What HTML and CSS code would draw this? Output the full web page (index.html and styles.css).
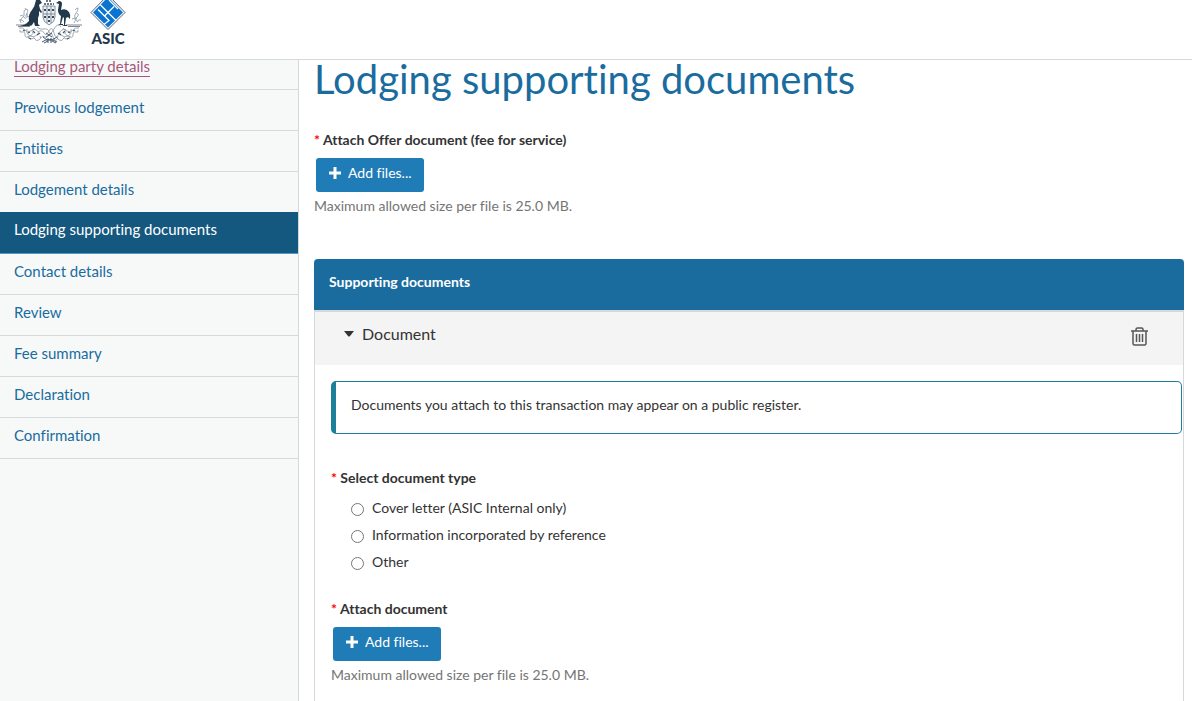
FILE: index.html
```html
<!DOCTYPE html>
<html lang="en">
<head>
  <meta charset="UTF-8">
  <title>Lodging supporting documents</title>
  <meta name="viewport" content="width=device-width, initial-scale=1.0">
  <link rel="stylesheet" href="styles.css">
</head>
<body>

<header class="site-header">
  <!-- coat of arms -->
  <svg class="crest" viewBox="0 0 68 46" aria-hidden="true">
    <g fill="none" stroke="#8a96a1" stroke-width="0.8">
      <path d="M1 25h16M51 25h16M3 26.500h12M53 26.500h12" stroke="#5d6b7a"/>
      <path d="M6 23q-2-3 1-5t2-5 3-4q2 2 0 4t2 4 0 5-4 2M10 8l1 2M5 16q3-2 4 1t4-1M4 20q4-1 5 2M13 14q-3 0-2 3"/>
      <path d="M59 23q2-2 1-5t1-5 2-5q-2 0-3 2M62 13q3 2 0 4t1 5M57 19q3-2 5 0M66 20q-3-1-4 2"/>
      <path d="M4 28q4-1 6 2t6 1 4-3M5 30q-1 3 2 2t3 3 5 1 2-4M12 29q-1 5 3 7t7-1-1-5-4 1M13 36q0 3 3 3t3-2M19 38q2 4 5 2t1-4"/>
      <path d="M64 28q-4-1-6 2t-6 1-4-3M63 30q1 3-2 2t-3 3-5 1-2-4M56 29q1 5-3 7t-7-1 1-5 4 1M55 36q0 3-3 3t-3-2M49 38q-2 4-5 2t-1-4"/>
      <path d="M22 27q3 3 7 2t5 3 5-3 7-2M23 32q4-3 6 1t5-2 5 2 6-1M25 38q3-3 5-1t4-2 4 2 5 1"/>
    </g>
    <g fill="none" stroke="#66788a" stroke-width="0.8">
      <path d="M28 6h12v11q0 5-6 8-6-3-6-8z" fill="#eef0f2"/>
      <path d="M28 14h12M32 6v17M36 6v17"/>
      <path d="M29 10h2m2 0h2m2 0h2M29 17h2m2 0h2m2 0h2M33 21h2" stroke="#3a4d5f" stroke-width="2"/>
      <path d="M29 4h10M31 1h6" stroke="#3a4d5f" stroke-width="1.500" stroke-dasharray="2 1"/>
    </g>
    <g fill="none" stroke="#44566a" stroke-width="1">
      <path d="M28 37l4 3h5l5-3M27 42q7-5 15 0M29 43l4-2m4 0l4 2M33 38v5m3-5v5M31 33l6 4m0-4l-6 4"/>
      <path d="M8 30l2 1M13 33l2-1M18 31l2 2M22 35l3-2M60 30l-2 1M55 33l-2-1M50 31l-2 2M46 35l-3-2M14 38l2 1M54 38l-2 1" stroke-width="1.200"/>
    </g>
    <g fill="#22384b">
      <!-- kangaroo -->
      <path d="M21 0h4l2 3-2 1-1 1 1 4 2 3-1 1-2-2v4l-1 3v6l2 2h-5l-1-4-2 3-3 1H5l6-2 3-3q-1-7 3-11 3-4 4-10z"/>
      <!-- emu -->
      <path d="M41 3l3-2q3 0 3 3l-1 6q5-2 8 2 2 3 1 7l-2-2-2 1-1 7h2v1h-5l2-1v-7l-1-1-2 7h2v1h-5l2-1 1-8q-3-2-3-6l1-6z"/>
    </g>
  </svg>

  <div class="brand">
    <svg class="brand-mark" viewBox="0 0 36 31" aria-hidden="true">
      <path d="M18-5L35 12.500 18 29.500 1 12.500z" fill="#fff" stroke="#4f6070" stroke-width="1"/>
      <path d="M18-3L33 12.500 18 27.500 3 12.500z" fill="#0a74d1"/>
      <path d="M10 4.500l16 16M14 16.500l4.500-4.500M24 6.500l-5.500 5.500M8 9.500l11 11-5 4M19 0l9 9" fill="none" stroke="#fff" stroke-width="1.300"/>
    </svg>
    <span class="brand-name">ASIC</span>
  </div>
</header>

<div class="page">
  <nav class="steps" aria-label="Lodgement steps">
    <a class="visited" href="#party"><span>Lodging party details</span></a>
    <a href="#previous">Previous lodgement</a>
    <a href="#entities">Entities</a>
    <a href="#lodgement">Lodgement details</a>
    <a class="active" href="#supporting" aria-current="page">Lodging supporting documents</a>
    <a href="#contact">Contact details</a>
    <a href="#review">Review</a>
    <a href="#fees">Fee summary</a>
    <a href="#declaration">Declaration</a>
    <a href="#confirmation">Confirmation</a>
  </nav>

  <main class="content">
    <h1>Lodging supporting documents</h1>

    <div class="field">
      <label class="field-label" for="offer"><span class="req">*</span> Attach Offer document (fee for service)</label>
      <button class="btn" id="offer" type="button">
        <svg class="plus" viewBox="0 0 12 12" aria-hidden="true"><path d="M4.500 0h3v4.500H12v3H7.500V12h-3V7.500H0v-3h4.500z"/></svg>
        Add files...
      </button>
      <p class="hint">Maximum allowed size per file is 25.0 MB.</p>
    </div>

    <section class="panel">
      <h2 class="panel-title">Supporting documents</h2>
      <div class="panel-body">

        <div class="doc-bar">
          <button class="toggle" type="button" aria-expanded="true">
            <svg class="caret" viewBox="0 0 10 6" aria-hidden="true"><path d="M0 0h10L6 5q-1 1-2 0z"/></svg>
            Document
          </button>
          <button class="trash" type="button" aria-label="Remove document">
            <svg viewBox="0 0 17 19" aria-hidden="true">
              <path d="M0 4h17M5 4V2.500Q5 1 6.500 1h4Q12 1 12 2.500V4M2 4v12.500q0 1.500 1.500 1.500h10q1.500 0 1.500-1.500V4M5.500 7v8M8.500 7v8M11.500 7v8"/>
            </svg>
          </button>
        </div>

        <div class="doc">
          <p class="notice">Documents you attach to this transaction may appear on a public register.</p>

          <fieldset class="types">
            <legend class="field-label"><span class="req">*</span> Select document type</legend>
            <label><input type="radio" name="type"> Cover letter (ASIC Internal only)</label>
            <label><input type="radio" name="type"> Information incorporated by reference</label>
            <label><input type="radio" name="type"> Other</label>
          </fieldset>

          <div class="field">
            <label class="field-label" for="attach"><span class="req">*</span> Attach document</label>
            <button class="btn" id="attach" type="button">
              <svg class="plus" viewBox="0 0 12 12" aria-hidden="true"><path d="M4.500 0h3v4.500H12v3H7.500V12h-3V7.500H0v-3h4.500z"/></svg>
              Add files...
            </button>
            <p class="hint">Maximum allowed size per file is 25.0 MB.</p>
          </div>
        </div>

      </div>
    </section>
  </main>
</div>

</body>
</html>
```
FILE: styles.css
```css
* {
  box-sizing: border-box;
}

body {
  margin: 0;
  min-height: 100vh;
  display: flex;
  flex-direction: column;
  background: #fff;
  color: #333;
  font-family: Lato, "Liberation Sans", sans-serif;
  font-size: 14px;
  font-variant-ligatures: none;
  line-height: 20px;
}

button {
  font: inherit;
  font-variant-ligatures: none;
  border: none;
  cursor: pointer;
}

/* header */
.site-header {
  position: sticky;
  top: 0;
  z-index: 1;
  height: 60px;
  flex: none;
  display: flex;
  gap: 7px;
  padding-left: 15px;
  background: #fff;
  border-bottom: 1px solid #d6d9da;
}

.crest {
  width: 68px;
  height: 46px;
}

.brand {
  display: flex;
  flex-direction: column;
  align-items: center;
}

.brand-mark {
  width: 36px;
  height: 31px;
}

.brand-name {
  color: #22384b;
  font-size: 15px;
  font-weight: 900;
  line-height: 15px;
}

.page {
  flex: 1;
  display: flex;
}

/* left steps, slides under the header */
.steps {
  width: 299px;
  flex: none;
  margin-top: -11px;
  background: #f7f9f9;
  border-right: 1px solid #d6d9da;
}

.steps a {
  display: block;
  height: 41px;
  padding: 7px 14px;
  border-bottom: 1px solid #d6d9da;
  color: #1a6c9e;
  font-size: 15px;
  text-decoration: none;
}

.steps .visited {
  color: #a6587a;
}

.steps .visited span {
  display: inline-block;
  line-height: 19px;
  border-bottom: 1px solid #a6587a;
}

.steps .active {
  height: 42px;
  margin-top: -1px;
  background: #14587f;
  border-color: #4d9bc8;
  color: #fff;
}

/* main column */
.content {
  flex: 1;
  padding: 0 8px 0 15px;
}

h1 {
  margin: 0 0 32px;
  color: #1a6c9e;
  font-size: 40px;
  font-weight: 400;
  line-height: 38px;
}

.field-label {
  display: block;
  padding: 0;
  margin-bottom: 8px;
  font-weight: 700;
}

.req {
  color: #f00;
}

.btn {
  display: flex;
  align-items: center;
  gap: 7px;
  height: 34px;
  margin-left: 2px;
  padding: 0 12px 4px 13px;
  border-radius: 3px;
  background: #1f7cb6;
  color: #fff;
}

.plus {
  width: 12px;
  height: 12px;
  fill: #fff;
}

.hint {
  margin: 4px 0 0;
  color: #757575;
}

.panel {
  margin-top: 43px;
}

.panel-title {
  margin: 0;
  padding: 13px 15px 18px;
  border-radius: 4px 4px 0 0;
  background: #1a6c9e;
  color: #fff;
  font-size: 14px;
  font-weight: 700;
}

.panel-body {
  border: 1px solid #d6d9da;
  border-top-width: 2px;
}

.doc-bar {
  display: flex;
  justify-content: space-between;
  align-items: flex-start;
  height: 53px;
  padding: 12px 35px 0 29px;
  background: #f4f4f4;
}

.toggle {
  display: flex;
  align-items: center;
  gap: 8px;
  padding: 0;
  background: none;
  color: #333;
  font-size: 16px;
}

.caret {
  width: 10px;
  height: 6px;
  fill: #333;
}

.trash {
  padding: 3px 0 0;
  background: none;
}

.trash svg {
  display: block;
  width: 17px;
  height: 19px;
  fill: none;
  stroke: #555;
  stroke-width: 1.5;
}

.doc {
  padding: 16px 1px 16px 16px;
}

.notice {
  margin: 0 0 34px;
  padding: 13px 15px 18px;
  border: 1px solid #1d7f9c;
  border-left-width: 5px;
  border-radius: 5px;
}

.types {
  margin: 0 0 20px;
  padding: 0;
  border: none;
}

.types .field-label {
  margin-bottom: 10px;
}

.types label {
  display: flex;
  align-items: center;
  gap: 8px;
  margin: 0 0 7px 20px;
}

.types input {
  width: 13px;
  height: 13px;
  margin: 3px 0 0;
}
```
